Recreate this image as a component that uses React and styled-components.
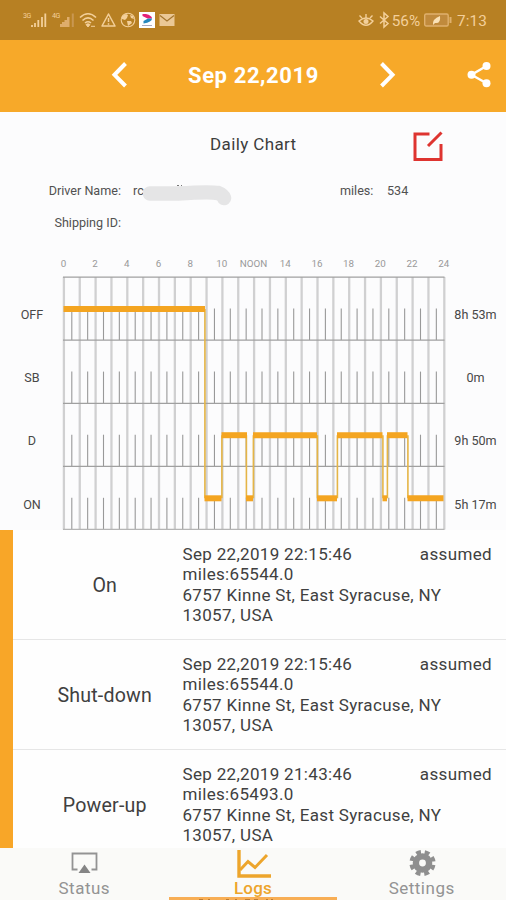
import React from "react";
import styled, { createGlobalStyle } from "styled-components";

const GlobalStyle = createGlobalStyle`
  * { box-sizing: border-box; }
  body { margin: 0; background: #fcfcfd; font-family: Roboto, "Liberation Sans", sans-serif; color: #3c3c3c; }
`;

const Screen = styled.div`
  width: 506px;
  height: 900px;
  display: flex;
  flex-direction: column;
  overflow: hidden;
`;

const StatusBar = styled.div`
  height: 40px;
  flex: none;
  background: #b78023;
  display: flex;
  justify-content: space-between;
  align-items: center;
  padding: 0 19px 0 23px;
  color: #f3cf9a;
`;

const StatusGroup = styled.div`
  display: flex;
  align-items: center;
`;

const StatusIcon = styled.svg`
  display: block;
  flex: none;
  overflow: visible;
  width: ${(p) => p.$w}px;
  height: 16px;
  margin-right: ${(p) => p.$gap || 0}px;
`;

const NetLabel = styled.span`
  align-self: flex-start;
  width: 8px;
  font-size: 7px;
  line-height: 8px;
  letter-spacing: -0.4px;
`;

const StatusText = styled.span`
  font-size: 15.3px;
  line-height: 20px;
  padding-top: 1px;
  letter-spacing: ${(p) => p.$track || 0}px;
  margin-right: ${(p) => p.$gap || 0}px;
`;

const Header = styled.header`
  height: 72px;
  flex: none;
  background: #f7a929;
  display: grid;
  grid-template-columns: 109px 22px 245px 22px 68px 26px 14px;
  align-items: center;
  padding-bottom: 3px;
  color: #fff;
`;

const HeaderIcon = styled.svg`
  display: block;
  width: ${(p) => p.$w}px;
  height: 28px;
  grid-column: ${(p) => p.$col};
`;

const HeaderDate = styled.h1`
  margin: 0;
  padding-top: 2px;
  grid-column: 3;
  text-align: center;
  font-size: 22px;
  font-weight: 700;
  line-height: 28px;
  letter-spacing: 0.6px;
`;

const ChartPanel = styled.section`
  height: 418px;
  flex: none;
  display: flex;
  flex-direction: column;
  > * { flex: none; }
`;

const TitleRow = styled.div`
  height: 63px;
  display: grid;
  grid-template-columns: 413px 30px;
  align-items: center;
  padding-top: 1px;
`;

const ChartTitle = styled.h2`
  margin: 0;
  padding-left: 210px;
  font-size: 17px;
  font-weight: 400;
  line-height: 22px;
  letter-spacing: 0.38px;
  white-space: nowrap;
`;

const EditIcon = styled.svg`
  display: block;
  width: 30px;
  height: 32px;
  margin-top: 3px;
`;

const InfoRow = styled.div`
  height: ${(p) => p.$h}px;
  display: grid;
  grid-template-columns: 121px 12px 207px 47px 1fr;
  align-items: center;
  font-size: 12.6px;
  line-height: 16px;
  color: #515151;
  white-space: nowrap;
`;

const InfoLabel = styled.span`
  text-align: right;
`;

const NameValue = styled.span`
  grid-column: 3;
  display: flex;
  align-items: center;
`;

const Smudge = styled.svg`
  display: block;
  width: 90px;
  height: 24px;
  margin: 8px 0 -4px -1px;
`;

const HourScale = styled.div`
  height: 37.5px;
  display: grid;
  grid-template-columns: repeat(13, 31.7px);
  padding: 18px 0 0 47.6px;
  font-size: 9.8px;
  line-height: 13px;
  color: #999;
  text-align: center;
`;

const ChartBody = styled.div`
  display: grid;
  grid-template-columns: 63px 382px 1fr;
`;

const SideLabels = styled.div`
  height: 253px;
  display: grid;
  grid-template-rows: repeat(4, 63.3px);
  padding: 6px 0 0 ${(p) => p.$inset || 0}px;
  align-items: center;
  justify-items: center;
  font-size: 12.6px;
  color: #484848;
  white-space: nowrap;
`;

const Plot = styled.svg`
  display: block;
  width: 382px;
  height: 253.5px;
  overflow: visible;
`;

const LogList = styled.section`
  flex: 1;
  min-height: 0;
  overflow: hidden;
  border-left: 13px solid #f8a628;
  background: #fefefe;
`;

const LogRow = styled.article`
  height: 110px;
  display: grid;
  grid-template-columns: 169.5px minmax(0, 1fr) auto;
  padding: 14px 14px 0 0;
  border-bottom: 1px solid #e6e6e6;
  font-size: 17px;
  line-height: 20.3px;
  color: #404040;
`;

const EventName = styled.div`
  font-size: 19.6px;
  line-height: 24px;
  padding: 30px 0 0 14px;
  text-align: center;
  letter-spacing: 0.2px;
`;

const EventDetails = styled.div`
  display: flex;
  flex-direction: column;
  white-space: nowrap;
  letter-spacing: 0.32px;
`;

const EventOrigin = styled.div`
  letter-spacing: 0.35px;
`;

const TabBar = styled.nav`
  height: 52px;
  flex: none;
  display: grid;
  grid-template-columns: repeat(3, 1fr);
  background: #fafaf8;
`;

const Tab = styled.div`
  display: flex;
  flex-direction: column;
  align-items: center;
  color: ${(p) => (p.$active ? "#eda52c" : "#939393")};
  font-size: 17px;
  font-weight: ${(p) => (p.$active ? 500 : 400)};
  line-height: 20px;
  letter-spacing: ${(p) => (p.$active ? 0.2 : 0.5)}px;
`;

const TabIcon = styled.svg`
  display: block;
  width: 36px;
  height: 30px;
`;

const TabLine = styled.svg`
  display: block;
  width: 168px;
  height: 3px;
  margin-top: -1px;
`;

const HOUR = 15.85;
const ROW = 63.1;
const hours = ["0", "2", "4", "6", "8", "10", "NOON", "14", "16", "18", "20", "22", "24"];

/* Duty segments: start x, end x, row index. */
const segments = [
  [0.5, 142, 0],
  [141.5, 158.5, 3],
  [158.5, 184, 2],
  [183, 190, 3],
  [190, 254, 2],
  [254, 274, 3],
  [274, 319.5, 2],
  [319.5, 324, 3],
  [324, 344.5, 2],
  [344.5, 380.5, 3],
];
const barY = (row) => 32 + row * ROW;

const logs = [
  { name: "On", time: "Sep 22,2019 22:15:46", miles: "65544.0" },
  { name: "Shut-down", time: "Sep 22,2019 22:15:46", miles: "65544.0" },
  { name: "Power-up", time: "Sep 22,2019 21:43:46", miles: "65493.0" },
];

function DutyPlot() {
  return (
    <Plot viewBox="0 0 382 253.5">
      {Array.from({ length: 25 }, (_, i) => (
        <line key={i} x1={0.9 + i * HOUR} x2={0.9 + i * HOUR} y1="0" y2="252.5" stroke="#d0d0d1" strokeWidth="2.3" />
      ))}
      {[0, 1, 2, 3].map((r) =>
        Array.from({ length: 24 }, (_, i) => (
          <line key={`${r}-${i}`} x1={8.8 + i * HOUR} x2={8.8 + i * HOUR} y1={31.5 + r * ROW} y2={63 + r * ROW} stroke="#999" strokeWidth="1.1" />
        ))
      )}
      {[0, 1, 2, 3, 4].map((r) => (
        <line key={r} x1="0" x2="381.5" y1={0.1 + r * ROW} y2={0.1 + r * ROW} stroke={r === 4 ? "#b5b5b5" : "#a0a0a0"} strokeWidth="1.3" />
      ))}
      {segments.slice(1).map(([x, , row], i) => (
        <line key={x} x1={x + 0.4} x2={x + 0.4} y1={barY(segments[i][2])} y2={barY(row)} stroke="#e5b546" strokeWidth="1.6" />
      ))}
      {segments.map(([a, b, row]) => (
        <line key={a} x1={a} x2={b} y1={barY(row)} y2={barY(row)} stroke="#f4a521" strokeWidth="6" />
      ))}
    </Plot>
  );
}

function StatusIcons() {
  return (
    <StatusGroup>
      <NetLabel>3G</NetLabel>
      <StatusIcon $w={15} $gap={6} viewBox="0 0 15 16">
        <path d="M1 15v-2M4 15v-4M7.3 15V8M11 15V5M14.3 15V1.5" stroke="currentColor" strokeWidth="1.8" />
      </StatusIcon>
      <NetLabel>4G</NetLabel>
      <StatusIcon $w={15} $gap={4} viewBox="0 0 15 16">
        <path d="M0 15v-3h2v-2h2.5v-2H7V5h2.5v10z" fill="#dfad6c" />
        <path d="M12.8 15V1.5" stroke="#c99751" strokeWidth="2" />
      </StatusIcon>
      <StatusIcon $w={18} $gap={4} viewBox="0 0 18 16">
        <path d="M1 5.5Q9-2 17 5.5M3.5 8.5Q9 3.3 14.5 8.5M6 11Q9 8.5 12 11" fill="none" stroke="currentColor" strokeWidth="1.6" />
        <path d="M9 15l-2-2.5q2-1.5 4 0zM12 14.3h4" fill="currentColor" stroke="currentColor" strokeWidth="1" />
      </StatusIcon>
      <StatusIcon $w={15} $gap={4} viewBox="0 0 15 16">
        <path d="M7.5 2L14 14H1z" fill="none" stroke="currentColor" strokeWidth="1.5" strokeLinejoin="round" />
        <path d="M7.5 6v4M7.5 11.3v1.5" stroke="currentColor" strokeWidth="1.5" />
      </StatusIcon>
      <StatusIcon $w={16} $gap={3} viewBox="0 0 16 16">
        <circle cx="8" cy="8" r="6.8" fill="none" stroke="currentColor" strokeWidth="1.1" />
        <path d="M2 4l4-2 2 1-1 3-2 2-3-1zM10 3l3 1 1 3-3-1zM7 9l4 0 1 2-4 3z" fill="currentColor" />
      </StatusIcon>
      <StatusIcon $w={16} $gap={4} viewBox="0 0 16 16">
        <path d="M0 0h16v16H0z" fill="#fff" />
        <path d="M3.5 2H7q6 1.500 6 4.500H8.500L3.500 4z" fill="#e52375" />
        <path d="M13 6.500q0 3.500-8.500 5V9L9 6.500z" fill="#2788bd" />
        <path d="M3 13.5h10" stroke="#aaa9bd" strokeWidth="1" />
      </StatusIcon>
      <StatusIcon $w={16} viewBox="0 0 16 16">
        <path d="M.5 2h15v12H.5z" fill="#ebc895" />
        <path d="M1 3.5L8 9l7-5.5" fill="none" stroke="#a4752d" strokeWidth="1.2" />
      </StatusIcon>
    </StatusGroup>
  );
}

function DeviceStatus() {
  return (
    <StatusGroup>
      <StatusIcon $w={16} $gap={5} viewBox="0 0 16 16">
        <path d="M1 9Q8 3 15 9 8 17.500 1 9z" fill="none" stroke="currentColor" strokeWidth="1.4" />
        <circle cx="8" cy="9.500" r="2.5" fill="currentColor" />
        <path d="M1.500 3.500l2.500 2.500M8 2v4M14.500 3.500L12 6" stroke="currentColor" strokeWidth="1.4" />
      </StatusIcon>
      <StatusIcon $w={10} $gap={3} viewBox="0 0 10 16">
        <path d="M1 4.500L9 11.500 5 15V1l4 3.500L1 11.500" fill="none" stroke="currentColor" strokeWidth="1.5" />
      </StatusIcon>
      <StatusText $gap={4}>56%</StatusText>
      <StatusIcon $w={28} $gap={5} viewBox="0 0 28 16">
        <rect x=".7" y="2" width="23.500" height="12" rx="1.5" fill="#c08a3c" stroke="#dfb06d" strokeWidth="1.4" />
        <path d="M26.500 5v6" stroke="#dfb06d" strokeWidth="2" />
        <path d="M9 13q-1-6 7-9 1 8-5 7z" fill="#fae2b8" />
      </StatusIcon>
      <StatusText $track={0.1}>7:13</StatusText>
    </StatusGroup>
  );
}

export default function App() {
  return (
    <Screen>
      <GlobalStyle />
      <StatusBar>
        <StatusIcons />
        <DeviceStatus />
      </StatusBar>
      <Header>
        <HeaderIcon $w={22} $col={2} viewBox="0 0 22 28">
          <path d="M16.500 2.500L5.500 13.800l11 11.200" fill="none" stroke="#fff" strokeWidth="4" />
        </HeaderIcon>
        <HeaderDate>Sep 22,2019</HeaderDate>
        <HeaderIcon $w={22} $col={4} viewBox="0 0 22 28">
          <path d="M5.500 2.500l11 11.300-11 11.200" fill="none" stroke="#fff" strokeWidth="4" />
        </HeaderIcon>
        <HeaderIcon $w={26} $col={6} viewBox="0 0 26 28">
          <path d="M20.500 5L5.500 13.700l15 8.600" fill="none" stroke="#fff" strokeWidth="2.4" />
          <circle cx="20.500" cy="5" r="4" fill="#fff" />
          <circle cx="5.500" cy="13.700" r="4" fill="#fff" />
          <circle cx="20.500" cy="22.300" r="4" fill="#fff" />
        </HeaderIcon>
      </Header>

      <ChartPanel>
        <TitleRow>
          <ChartTitle>Daily Chart</ChartTitle>
          <EditIcon viewBox="0 0 30 32">
            <path d="M16.500 4H2v25.500h26V14" fill="none" stroke="#de3430" strokeWidth="3" />
            <path d="M15 16L28.500 2.500" stroke="#de3430" strokeWidth="3" />
          </EditIcon>
        </TitleRow>
        <InfoRow $h={31}>
          <InfoLabel>Driver Name:</InfoLabel>
          <NameValue>
            rc
            <Smudge viewBox="0 0 90 24">
              <path d="M7 8.500h28q32-2 40-.5 5 2 6 5" fill="none" stroke="#e5e5e6" strokeWidth="14.500" strokeLinecap="round" strokeLinejoin="round" />
              <path d="M34 .5h2M38 .5h1" stroke="#777" strokeWidth="1" />
            </Smudge>
          </NameValue>
          <span>miles:</span>
          <span>534</span>
        </InfoRow>
        <InfoRow $h={33}>
          <InfoLabel>Shipping ID:</InfoLabel>
        </InfoRow>
        <HourScale>
          {hours.map((h) => (
            <span key={h}>{h}</span>
          ))}
        </HourScale>
        <ChartBody>
          <SideLabels $inset={1}>
            <span>OFF</span>
            <span>SB</span>
            <span>D</span>
            <span>ON</span>
          </SideLabels>
          <DutyPlot />
          <SideLabels>
            <span>8h 53m</span>
            <span>0m</span>
            <span>9h 50m</span>
            <span>5h 17m</span>
          </SideLabels>
        </ChartBody>
      </ChartPanel>

      <LogList>
        {logs.map((log) => (
          <LogRow key={log.name}>
            <EventName>{log.name}</EventName>
            <EventDetails>
              <span>{log.time}</span>
              <span>miles:{log.miles}</span>
              <span>6757 Kinne St, East Syracuse, NY</span>
              <span>13057, USA</span>
            </EventDetails>
            <EventOrigin>assumed</EventOrigin>
          </LogRow>
        ))}
      </LogList>

      <TabBar>
        <Tab>
          <TabIcon viewBox="0 0 36 30">
            <path d="M11.500 21.500H6.500V5.500h24v16h-5" fill="none" stroke="#939393" strokeWidth="1.8" />
            <path d="M18.500 16.500l6 8.500h-12z" fill="#858585" />
          </TabIcon>
          Status
        </Tab>
        <Tab $active>
          <TabIcon viewBox="0 0 36 30">
            <path d="M4 2v26h32" fill="none" stroke="#eda52c" strokeWidth="3.4" />
            <path d="M5 22l8-8.500 7 6L32 7" fill="none" stroke="#eda52c" strokeWidth="3" />
          </TabIcon>
          Logs
          <TabLine viewBox="0 0 168 3">
            <path d="M0 0h168v3H0z" fill="#f8ae55" />
            <path d="M30 2.500h4M39 2.500h2M57 2.500h3M66 2.500h2M76 2.500h5M85 2.500h4M97 2.500h2M102 2.500h2" stroke="#bd7b32" strokeWidth="1" />
          </TabLine>
        </Tab>
        <Tab>
          <TabIcon viewBox="0 0 36 30">
            <circle cx="18.500" cy="15" r="6.600" fill="none" stroke="#8f8f8f" strokeWidth="6.400" />
            <circle cx="18.500" cy="15" r="11" fill="none" stroke="#8f8f8f" strokeWidth="4.200" strokeDasharray="4.800 3.839" strokeDashoffset="-1.92" />
          </TabIcon>
          Settings
        </Tab>
      </TabBar>
    </Screen>
  );
}
